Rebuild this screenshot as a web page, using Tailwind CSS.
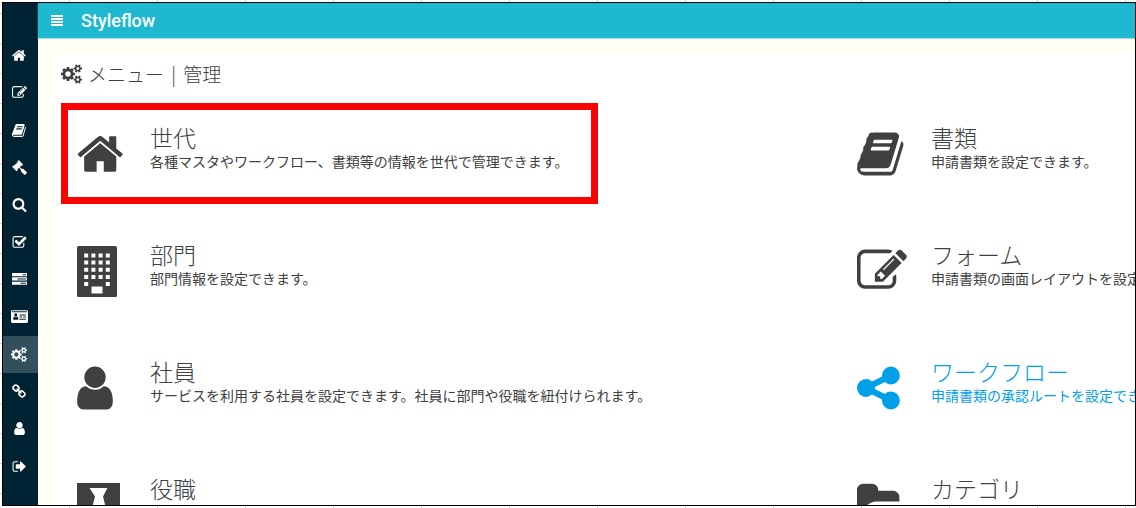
<!doctype html>
<html lang="ja">

<head>
  <meta charset="UTF-8">
  <meta name="viewport" content="width=device-width, initial-scale=1.0">
  <title>Styleflow</title>
  <script src="https://cdn.jsdelivr.net/npm/@tailwindcss/browser@4"></script>
</head>

<body class="h-screen overflow-hidden bg-white pt-[2px] pl-[2px] bg-[linear-gradient(to_right,#d4d4d4_1px,transparent_1px),linear-gradient(to_bottom,#d4d4d4_1px,transparent_1px)] bg-[size:88px_30px] bg-[position:69px_13px] font-['Noto_Sans_CJK_JP',sans-serif] text-[#404040]">

  <!-- icon definitions -->
  <svg class="hidden" aria-hidden="true">
    <symbol id="home" viewBox="64 0 1792 1792"><path d="M1472 992v480q0 26-19 45t-45 19h-384v-384h-256v384h-384q-26 0-45-19t-19-45v-480q0-1 .5-3t.5-3l575-474 575 474q1 2 1 6zm223-69l-62 74q-8 9-21 11h-3q-13 0-21-7l-692-577-692 577q-12 8-24 7-13-2-21-11l-62-74q-8-10-7-23.5t11-21.5l719-599q32-26 76-26t76 26l244 204v-195q0-14 9-23t23-9h192q14 0 23 9t9 23v408l219 182q10 8 11 21.5t-7 23.5z" /></symbol>
    <symbol id="edit" viewBox="0 0 1792 1792"><path d="M888 1184l116-116-152-152-116 116v56h96v96h56zm440-720q-16-16-33 1l-350 350q-17 17-1 33t33-1l350-350q17-17 1-33zm80 594v190q0 119-84.5 203.5t-203.5 84.5h-832q-119 0-203.5-84.5t-84.5-203.5v-832q0-119 84.5-203.5t203.5-84.5h832q63 0 117 25 15 7 18 23 3 17-9 29l-49 49q-14 14-32 8-23-6-45-6h-832q-66 0-113 47t-47 113v832q0 66 47 113t113 47h832q66 0 113-47t47-113v-126q0-13 9-22l64-64q15-15 35-7t20 29zm-96-738l288 288-672 672h-288v-288zm444 132l-92 92-288-288 92-92q28-28 68-28t68 28l152 152q28 28 28 68t-28 68z" /></symbol>
    <symbol id="book" viewBox="64 0 1792 1792"><path d="M1703 478q40 57 18 129l-275 906q-19 64-76.5 107.5t-122.5 43.5h-923q-77 0-148.5-53.5t-99.5-131.5q-24-67-2-127 0-4 3-27t4-37q1-8-3-21.5t-3-19.5q2-11 8-21t16.5-23.5 16.5-23.5q23-38 45-91.5t30-91.5q3-10 .5-30t-.5-28q3-11 17-28t17-23q21-36 42-92t25-90q1-9-2.5-32t.5-28q4-13 22-30.5t22-22.5q19-26 42.5-84.5t27.5-96.5q1-8-3-25.5t-2-26.5q2-8 9-18t18-23 17-21q8-12 16.5-30.5t15-35 16-36 19.5-32 26.5-23.5 36-11.5 47.5 5.5l-1 3q38-9 51-9h761q74 0 114 56t18 130l-274 906q-36 119-71.5 153.5t-128.5 34.5h-869q-27 0-38 15-11 16-1 43 24 70 144 70h923q29 0 56-15.5t35-41.5l300-987q7-22 5-57 38 15 59 43zm-1064 2q-4 13 2 22.5t20 9.5h608q13 0 25.5-9.5t16.5-22.5l21-64q4-13-2-22.5t-20-9.5h-608q-13 0-25.5 9.5t-16.5 22.5zm-83 256q-4 13 2 22.5t20 9.5h608q13 0 25.5-9.5t16.5-22.5l21-64q4-13-2-22.5t-20-9.5h-608q-13 0-25.5 9.5t-16.5 22.5z" /></symbol>
    <symbol id="gavel" viewBox="0 0 1792 1792"><path d="M1771 1536q0 53-37 90l-107 108q-39 37-91 37-53 0-90-37l-363-364q-38-36-38-90 0-53 43-96l-256-256-126 126q-14 14-34 14t-34-14q2 2 12.5 12t12.5 13 10 11.5 10 13.5 6 13.5 5.5 16.5 1.5 18q0 38-28 68-3 3-16.5 18t-19 20.5-18.5 16.5-22 15.5-22 9-26 4.5q-40 0-68-28l-408-408q-28-28-28-68 0-13 4.5-26t9-22 15.5-22 16.5-18.5 20.5-19 18-16.5q30-28 68-28 10 0 18 1.5t16.5 5.5 13.5 6 13.5 10 11.5 10 13 12.5 12 12.5q-14-14-14-34t14-34l348-348q14-14 34-14t34 14q-2-2-12.5-12t-12.5-13-10-11.5-10-13.5-6-13.5-5.5-16.5-1.5-18q0-38 28-68 3-3 16.5-18t19-20.5 18.5-16.5 22-15.5 22-9 26-4.5q40 0 68 28l408 408q28 28 28 68 0 13-4.5 26t-9 22-15.5 22-16.5 18.5-20.5 19-18 16.5q-30 28-68 28-10 0-18-1.5t-16.5-5.5-13.5-6-13.5-10-11.5-10-13-12.5-12-12.5q14 14 14 34t-14 34l-126 126 256 256q43-43 96-43 52 0 91 37l363 363q37 39 37 91z" /></symbol>
    <symbol id="search" viewBox="0 0 1792 1792"><path d="M1216 832q0-185-131.5-316.5t-316.5-131.5-316.5 131.5-131.5 316.5 131.5 316.5 316.5 131.5 316.5-131.5 131.5-316.5zm512 832q0 52-38 90t-90 38q-54 0-90-38l-343-342q-179 124-399 124-143 0-273.5-55.5t-225-150-150-225-55.5-273.5 55.5-273.5 150-225 225-150 273.5-55.5 273.5 55.5 225 150 150 225 55.5 273.5q0 220-124 399l343 343q37 37 37 90z" /></symbol>
    <symbol id="check" viewBox="0 0 1792 1792"><path d="M1472 930v318q0 119-84.5 203.5t-203.5 84.5h-832q-119 0-203.5-84.5t-84.5-203.5v-832q0-119 84.5-203.5t203.5-84.5h832q63 0 117 25 15 7 18 23 3 17-9 29l-49 49q-10 10-23 10-3 0-9-2-23-6-45-6h-832q-66 0-113 47t-47 113v832q0 66 47 113t113 47h832q66 0 113-47t47-113v-254q0-13 9-22l64-64q10-10 23-10 6 0 12 3 20 8 20 29zm231-489l-814 814q-24 24-57 24t-57-24l-430-430q-24-24-24-57t24-57l110-110q24-24 57-24t57 24l263 263 647-647q24-24 57-24t57 24l110 110q24 24 24 57t-24 57z" /></symbol>
    <symbol id="tasks" viewBox="0 0 1792 1792"><path d="M1024 1408h640v-128h-640v128zm-384-512h1024v-128h-1024v128zm640-512h384v-128h-384v128zm512 832v256q0 26-19 45t-45 19h-1664q-26 0-45-19t-19-45v-256q0-26 19-45t45-19h1664q26 0 45 19t19 45zm0-512v256q0 26-19 45t-45 19h-1664q-26 0-45-19t-19-45v-256q0-26 19-45t45-19h1664q26 0 45 19t19 45zm0-512v256q0 26-19 45t-45 19h-1664q-26 0-45-19t-19-45v-256q0-26 19-45t45-19h1664q26 0 45 19t19 45z" /></symbol>
    <symbol id="card" viewBox="0 0 2048 1792"><path fill-rule="evenodd" d="M160 128h1728q160 0 160 160v1216q0 160-160 160h-1728q-160 0-160-160v-1216q0-160 160-160zM128 256v128h1792v-128zM896 1206q0-236-168-306-80 76-152 76t-152-76q-168 70-168 306 0 74 70 74h500q70 0 70-74zM768 704a192 192 0 1 0-384 0a192 192 0 1 0 384 0zM1024 1152v128h768v-128zM1024 896v128h320v-128zM1472 896v128h320v-128zM1024 640v128h768v-128z" /></symbol>
    <symbol id="cogs" viewBox="0 0 1920 1792"><path d="M896 896q0-106-75-181t-181-75-181 75-75 181 75 181 181 75 181-75 75-181zm768 512q0-52-38-90t-90-38-90 38-38 90q0 53 37.5 90.5t90.5 37.5 90.5-37.5 37.5-90.5zm0-1024q0-52-38-90t-90-38-90 38-38 90q0 53 37.5 90.5t90.5 37.5 90.5-37.5 37.5-90.5zm-384 421v185q0 10-7 19.5t-16 10.5l-155 24q-11 35-32 76 34 48 90 115 7 11 7 20 0 12-7 19-23 30-82.5 89.5t-78.5 59.5q-11 0-21-7l-115-90q-37 19-77 31-11 108-23 155-7 24-30 24h-186q-11 0-20-7.5t-10-17.5l-23-153q-34-10-75-31l-118 89q-7 7-20 7-11 0-21-8-144-133-144-160 0-9 7-19 10-14 41-53t47-61q-23-44-35-82l-152-24q-10-1-17-9.5t-7-19.5v-185q0-10 7-19.5t16-10.5l155-24q11-35 32-76-34-48-90-115-7-11-7-20 0-12 7-20 22-30 82-89t79-59q11 0 21 7l115 90q34-18 77-32 11-108 23-154 7-24 30-24h186q11 0 20 7.5t10 17.5l23 153q34 10 75 31l118-89q8-7 20-7 11 0 21 8 144 133 144 160 0 8-7 19-12 16-42 54t-45 60q23 48 34 82l152 23q10 2 17 10.5t7 19.5zm640 533v140q0 16-149 31-12 27-30 52 51 113 51 138 0 4-4 7-122 71-124 71-8 0-46-47t-52-68q-20 2-30 2t-30-2q-14 21-52 68t-46 47q-2 0-124-71-4-3-4-7 0-25 51-138-18-25-30-52-149-15-149-31v-140q0-16 149-31 13-29 30-52-51-113-51-138 0-4 4-7 4-2 35-20t59-34 30-16q8 0 46 46.5t52 67.5q20-2 30-2t30 2q51-71 92-112l6-2q4 0 124 70 4 3 4 7 0 25-51 138 17 23 30 52 149 15 149 31zm0-1024v140q0 16-149 31-12 27-30 52 51 113 51 138 0 4-4 7-122 71-124 71-8 0-46-47t-52-68q-20 2-30 2t-30-2q-14 21-52 68t-46 47q-2 0-124-71-4-3-4-7 0-25 51-138-18-25-30-52-149-15-149-31v-140q0-16 149-31 13-29 30-52-51-113-51-138 0-4 4-7 4-2 35-20t59-34 30-16q8 0 46 46.5t52 67.5q20-2 30-2t30 2q51-71 92-112l6-2q4 0 124 70 4 3 4 7 0 25-51 138 17 23 30 52 149 15 149 31z" /></symbol>
    <symbol id="link" viewBox="0 0 1792 1792"><path d="M1456 1216q0-40-28-68l-208-208q-28-28-68-28-42 0-72 32 3 3 19 18.5t21.5 21.5 15 19 13 25.5 3.5 27.5q0 40-28 68t-68 28q-15 0-27.5-3.5t-25.5-13-19-15-21.5-21.5-18.5-19q-33 31-33 73 0 40 28 68l206 207q27 27 68 27 40 0 68-26l147-146q28-28 28-67zm-703-705q0-40-28-68l-206-207q-28-28-68-28-39 0-68 27l-147 146q-28 28-28 67 0 40 28 68l208 208q27 27 68 27 42 0 72-31-3-3-19-18.5t-21.5-21.5-15-19-13-25.5-3.5-27.5q0-40 28-68t68-28q15 0 27.5 3.5t25.5 13 19 15 21.5 21.5 18.5 19q33-31 33-73zm895 705q0 120-85 203l-147 146q-83 83-203 83-121 0-204-85l-206-207q-83-83-83-203 0-123 88-209l-88-88q-86 88-208 88-120 0-204-84l-208-208q-84-84-84-204t85-203l147-146q83-83 203-83 121 0 204 85l206 207q83 83 83 203 0 123-88 209l88 88q86-88 208-88 120 0 204 84l208 208q84 84 84 204z" /></symbol>
    <symbol id="user" viewBox="256 0 1280 1792"><path d="M1536 1399q0 109-62.5 187t-150.5 78h-854q-88 0-150.5-78t-62.5-187q0-85 8.5-160.5t31.5-152 58.5-131 94-89 134.5-34.5q131 128 313 128t313-128q76 0 134.5 34.5t94 89 58.5 131 31.5 152 8.5 160.5zm-256-887q0 159-112.5 271.5t-271.5 112.5-271.5-112.5-112.5-271.5 112.5-271.5 271.5-112.5 271.5 112.5 112.5 271.5z" /></symbol>
    <symbol id="signout" viewBox="0 0 1792 1792"><path d="M704 1440q0 4 1 20t.5 26.5-3 23.5-10 19.5-20.5 6.5h-320q-119 0-203.5-84.5t-84.5-203.5v-704q0-119 84.5-203.5t203.5-84.5h320q13 0 22.5 9.5t9.5 22.5q0 4 1 20t.5 26.5-3 23.5-10 19.5-20.5 6.5h-320q-66 0-113 47t-47 113v704q0 66 47 113t113 47h312l11.5 1 11.5 3 8 5.5 7 9 2 13.5zm928-544q0 26-19 45l-544 544q-19 19-45 19t-45-19-19-45v-288h-448q-26 0-45-19t-19-45v-384q0-26 19-45t45-19h448v-288q0-26 19-45t45-19 45 19l544 544q19 19 19 45z" /></symbol>
    <symbol id="share" viewBox="128 0 1792 1792"><path d="M1344 1024q133 0 226.5 93.5t93.5 226.5-93.5 226.5-226.5 93.5-226.5-93.5-93.5-226.5q0-12 2-34l-360-180q-92 86-218 86-133 0-226.5-93.5t-93.5-226.5 93.5-226.5 226.5-93.5q126 0 218 86l360-180q-2-22-2-34 0-133 93.5-226.5t226.5-93.5 226.5 93.5 93.5 226.5-93.5 226.5-226.5 93.5q-126 0-218-86l-360 180q2 22 2 34t-2 34l360 180q92-86 218-86z" /></symbol>
    <symbol id="folder" viewBox="0 0 1920 1792"><path d="M1879 952q0 31-31 66l-336 396q-43 51-120.5 86.5t-143.5 35.5h-1088q-34 0-60.5-13t-26.5-43q0-31 31-66l336-396q43-51 120.5-86.5t143.5-35.5h1088q34 0 60.5 13t26.5 43zm-343-344v160h-832q-94 0-197 47.5t-164 119.5l-337 396-5 6q0-4-.5-12.5t-.5-12.5v-960q0-92 66-158t158-66h320q92 0 158 66t66 158v32h544q92 0 158 66t66 158z" /></symbol>
    <symbol id="building" viewBox="0 0 40 51">
      <rect width="40" height="51" rx="1.5" />
      <g fill="#fff">
        <path d="M14.500 40.500h11v7h-11z" />
        <path stroke="#fff" stroke-width="4" stroke-dasharray="4 3.200" d="M7.200 9.500h26M7.200 16.500h26M7.200 23.700h26M7.200 31h26" />
        <path d="M7.200 36h4v4h-4zM28.800 36h4v4h-4z" />
      </g>
    </symbol>
    <symbol id="tie" viewBox="0 0 43 43">
      <path fill-rule="evenodd" d="M0 0h43v43h-43zM12.500 5h18l-4.500 8.500 5 20-9 6-9-6 5-20z" />
    </symbol>
  </svg>

  <div class="flex h-[calc(100vh-4px)] overflow-hidden border border-black bg-[#fffff5]">

    <!-- sidebar -->
    <nav class="w-[35px] shrink-0 bg-[#002333] pt-[34px] text-white">
      <ul class="grid h-[448px] grid-rows-12">
        <li><a href="#" aria-label="ホーム" class="flex h-full items-center justify-center pr-[3px]"><svg class="size-[15px] fill-current"><use href="#home" /></svg></a></li>
        <li><a href="#" aria-label="申請" class="flex h-full items-center justify-center pr-[3px]"><svg class="size-[15px] fill-current"><use href="#edit" /></svg></a></li>
        <li><a href="#" aria-label="書類" class="flex h-full items-center justify-center pr-[3px]"><svg class="size-[15px] fill-current"><use href="#book" /></svg></a></li>
        <li><a href="#" aria-label="承認" class="flex h-full items-center justify-center pr-[3px]"><svg class="size-[15px] fill-current"><use href="#gavel" /></svg></a></li>
        <li><a href="#" aria-label="検索" class="flex h-full items-center justify-center pr-[3px]"><svg class="size-[15px] fill-current"><use href="#search" /></svg></a></li>
        <li><a href="#" aria-label="確認" class="flex h-full items-center justify-center pr-[3px]"><svg class="size-[15px] fill-current"><use href="#check" /></svg></a></li>
        <li><a href="#" aria-label="タスク" class="flex h-full items-center justify-center pr-[3px]"><svg class="size-[15px] fill-current"><use href="#tasks" /></svg></a></li>
        <li><a href="#" aria-label="名簿" class="flex h-full items-center justify-center pr-[3px]"><svg class="h-[15px] w-[17px] fill-current"><use href="#card" /></svg></a></li>
        <li class="bg-[#324f5c]"><a href="#" aria-label="管理" class="flex h-full items-center justify-center pr-[3px]"><svg class="h-[15px] w-[16px] fill-current"><use href="#cogs" /></svg></a></li>
        <li><a href="#" aria-label="リンク" class="flex h-full items-center justify-center pr-[3px]"><svg class="size-[15px] fill-current"><use href="#link" /></svg></a></li>
        <li><a href="#" aria-label="ユーザー" class="flex h-full items-center justify-center pr-[3px]"><svg class="h-[15px] w-[11px] fill-current"><use href="#user" /></svg></a></li>
        <li><a href="#" aria-label="ログアウト" class="flex h-full items-center justify-center pr-[3px]"><svg class="size-[15px] fill-current"><use href="#signout" /></svg></a></li>
      </ul>
    </nav>

    <div class="flex min-w-0 flex-1 flex-col">
      <header class="flex h-[35px] shrink-0 items-center gap-[18px] bg-[#1eb8d0] pl-[13px] text-white shadow-[0_1px_1px_#b5dde0]">
        <button type="button" aria-label="メニュー"><svg class="h-[11px] w-[12px] fill-current" viewBox="0 0 12 11"><path d="M0 0h12v2H0zM0 3h12v2H0zM0 6h12v2H0zM0 9h12v2H0z" /></svg></button>
        <a href="#" class="font-[Roboto,sans-serif] text-[18px] leading-6 font-medium">Styleflow</a>
      </header>

      <main class="mt-4 ml-4 flex-1 overflow-hidden bg-white pl-[7px]">
        <h1 class="mt-2 flex h-6 items-center gap-[6px] text-[19px] leading-6 font-light whitespace-nowrap">
          <svg class="h-[20px] w-[21px] fill-current"><use href="#cogs" /></svg>
          <span>メニュー<span class="mx-[3px]"> | </span>管理</span>
        </h1>

        <ul class="mt-[39px] grid auto-rows-[117px] grid-cols-[780px_780px] pl-4 whitespace-nowrap">
          <li class="relative">
            <div class="pointer-events-none absolute -top-[22px] -left-4 h-[101px] w-[537px] border-7 border-[#ff0000]"></div>
            <a href="#" class="flex gap-[23px]">
              <svg class="mt-1 size-[50px] fill-current"><use href="#home" /></svg>
              <div>
                <h2 class="text-[23px] leading-6 font-light">世代</h2>
                <p class="text-sm leading-6">各種マスタやワークフロー、書類等の情報を世代で管理できます。</p>
              </div>
            </a>
          </li>
          <li>
            <a href="#" class="flex gap-6">
              <svg class="mt-1 size-[50px] fill-current"><use href="#book" /></svg>
              <div>
                <h2 class="text-[23px] leading-6 font-light">書類</h2>
                <p class="text-sm leading-6">申請書類を設定できます。</p>
              </div>
            </a>
          </li>
          <li>
            <a href="#" class="flex gap-[33px]">
              <svg class="mt-1 h-[51px] w-[40px] fill-current"><use href="#building" /></svg>
              <div>
                <h2 class="text-[23px] leading-6 font-light">部門</h2>
                <p class="text-sm leading-6">部門情報を設定できます。</p>
              </div>
            </a>
          </li>
          <li>
            <a href="#" class="flex gap-6">
              <svg class="mt-1 size-[50px] fill-current"><use href="#edit" /></svg>
              <div>
                <h2 class="text-[23px] leading-6 font-light">フォーム</h2>
                <p class="text-sm leading-6">申請書類の画面レイアウトを設定できます。</p>
              </div>
            </a>
          </li>
          <li>
            <a href="#" class="flex gap-[37px]">
              <svg class="mt-1 h-[50px] w-[36px] fill-current"><use href="#user" /></svg>
              <div>
                <h2 class="text-[23px] leading-6 font-light">社員</h2>
                <p class="text-sm leading-6">サービスを利用する社員を設定できます。社員に部門や役職を紐付けられます。</p>
              </div>
            </a>
          </li>
          <li>
            <a href="#" class="flex gap-6 text-[#00a0e9]">
              <svg class="mt-1 size-[50px] fill-current"><use href="#share" /></svg>
              <div>
                <h2 class="text-[23px] leading-6 font-light">ワークフロー</h2>
                <p class="text-sm leading-6">申請書類の承認ルートを設定できます。</p>
              </div>
            </a>
          </li>
          <li>
            <a href="#" class="flex gap-[30px]">
              <svg class="mt-[7px] size-[43px] fill-current"><use href="#tie" /></svg>
              <h2 class="text-[23px] leading-6 font-light">役職</h2>
            </a>
          </li>
          <li>
            <a href="#" class="flex gap-[21px]">
              <svg class="mt-1 h-[50px] w-[53px] fill-current"><use href="#folder" /></svg>
              <h2 class="text-[23px] leading-6 font-light">カテゴリ</h2>
            </a>
          </li>
        </ul>
      </main>
    </div>
  </div>

</body>

</html>
